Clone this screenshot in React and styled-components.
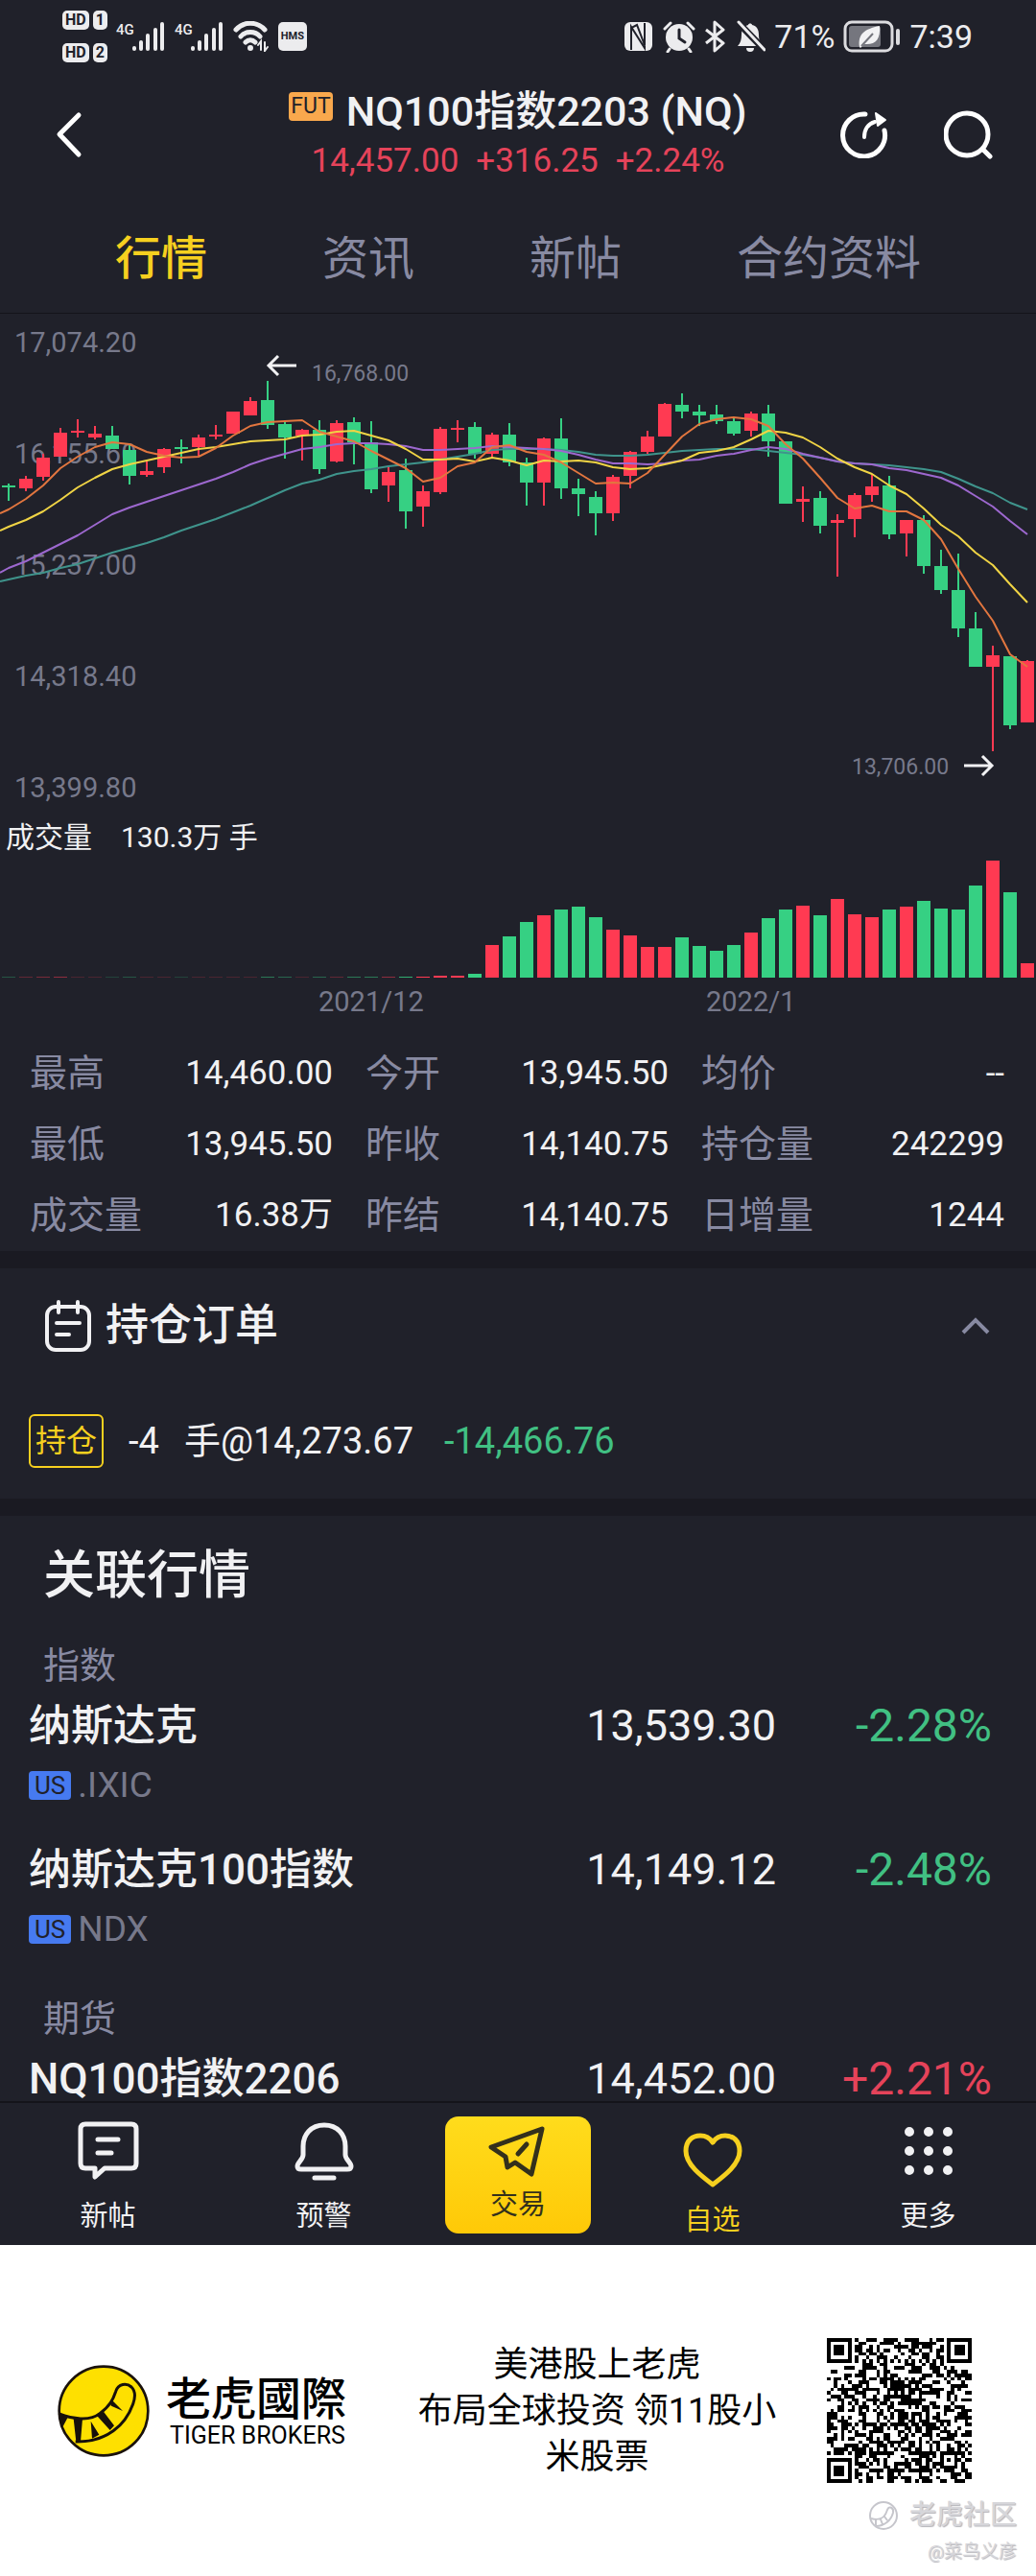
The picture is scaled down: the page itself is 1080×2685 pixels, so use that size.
import React, { useState } from 'react'
import styled, { createGlobalStyle, css } from 'styled-components'

const color = {
  bg: '#20212a',
  band: '#1a1a22',
  line: '#14141a',
  text: '#f1f1f3',
  muted: '#888aa2',
  axis: '#77798b',
  red: '#e5435a',
  green: '#41c083',
  barRed: '#ff3a52',
  barGreen: '#36d083',
  yellow: '#f6d01f',
}

const tabs = ['行情', '资讯', '新帖', '合约资料']

const stats = [
  ['最高', '14,460.00'],
  ['今开', '13,945.50'],
  ['均价', '--'],
  ['最低', '13,945.50'],
  ['昨收', '14,140.75'],
  ['持仓量', '242299'],
  ['成交量', '16.38万'],
  ['昨结', '14,140.75'],
  ['日增量', '1244'],
]

const groups = [
  {
    title: '指数',
    rows: [
      { name: '纳斯达克', code: '.IXIC', price: '13,539.30', change: '-2.28%' },
      { name: '纳斯达克100指数', code: 'NDX', price: '14,149.12', change: '-2.48%' },
    ],
  },
  {
    title: '期货',
    rows: [{ name: 'NQ100指数2206', price: '14,452.00', change: '+2.21%' }],
  },
]

// [up, high, body top, body bottom, low, volume]
const candles = [
  [0, 177, 179, 181, 195, 0.3], [1, 169, 172, 182, 185, 0.3], [1, 146, 150, 170, 174, 0.4],
  [1, 119, 124, 149, 149, 0.5], [1, 110, 122, 124, 129, 0.2], [1, 117, 125, 129, 131, 0.2],
  [0, 117, 127, 141, 141, 0.2], [0, 136, 142, 169, 178, 0.3], [1, 154, 164, 168, 170, 0.2],
  [1, 140, 141, 160, 166, 0.2], [0, 131, 139, 141, 156, 0.2], [1, 126, 129, 139, 148, 0.2],
  [1, 116, 126, 128, 131, 0.2], [1, 102, 102, 125, 125, 0.2], [1, 87, 91, 106, 106, 0.2],
  [0, 70, 90, 116, 120, 0.5], [0, 111, 115, 129, 151, 0.4], [1, 120, 121, 127, 153, 0.2],
  [0, 111, 121, 162, 167, 0.4], [1, 111, 114, 154, 155, 0.3], [0, 108, 113, 134, 157, 0.5],
  [0, 112, 134, 183, 187, 0.5], [1, 160, 165, 179, 196, 0.5], [0, 151, 163, 206, 224, 0.8],
  [1, 179, 185, 201, 222, 1], [1, 118, 120, 186, 188, 2], [1, 111, 119, 121, 134, 2],
  [0, 113, 118, 146, 151, 4], [1, 124, 126, 146, 150, 34], [0, 114, 126, 155, 159, 43],
  [0, 150, 155, 176, 200, 58], [1, 129, 130, 176, 200, 65], [0, 109, 130, 182, 193, 71],
  [0, 172, 182, 188, 211, 74], [0, 185, 191, 208, 231, 63], [1, 168, 170, 208, 216, 50],
  [1, 143, 144, 169, 182, 44], [1, 122, 128, 144, 146, 32], [1, 93, 94, 128, 128, 32],
  [0, 83, 95, 102, 109, 42], [0, 95, 102, 106, 117, 33], [0, 95, 105, 112, 115, 28],
  [0, 109, 112, 125, 127, 34], [1, 102, 104, 122, 128, 47], [0, 95, 104, 133, 149, 62],
  [0, 133, 133, 198, 198, 71], [1, 180, 193, 196, 217, 75], [0, 185, 192, 221, 229, 65],
  [1, 209, 215, 218, 274, 82], [1, 187, 189, 214, 233, 66], [1, 168, 180, 189, 196, 63],
  [0, 169, 179, 230, 235, 71], [1, 215, 215, 229, 253, 74], [0, 210, 215, 263, 271, 80],
  [0, 246, 263, 288, 292, 72], [0, 250, 288, 328, 337, 71], [0, 311, 328, 368, 368, 96],
  [1, 346, 356, 368, 456, 122], [0, 357, 357, 429, 433, 89], [1, 361, 362, 426, 426, 15],
]

const averages = [
  {
    stroke: '#3f948c',
    points: [279, 277, 273, 270, 265, 261, 255, 249, 244, 239, 233, 226, 220, 214, 207, 200, 192, 184, 177, 173, 167, 164, 162, 159, 157, 155, 152, 149, 146, 142, 141, 141, 141, 142, 144, 147, 148, 148, 147, 145, 143, 142, 141, 141, 141, 143, 145, 147, 150, 154, 156, 157, 158, 160, 162, 165, 172, 180, 187, 197, 204],
  },
  {
    stroke: '#9d68cf',
    points: [270, 265, 258, 249, 240, 231, 220, 209, 202, 196, 190, 184, 178, 172, 165, 157, 151, 146, 141, 139, 136, 135, 135, 136, 138, 142, 142, 141, 140, 138, 139, 140, 141, 143, 147, 152, 156, 156, 157, 156, 153, 152, 148, 146, 142, 139, 141, 146, 150, 154, 156, 157, 161, 163, 167, 171, 179, 190, 201, 216, 230],
  },
  {
    stroke: '#f0d445',
    points: [226, 222, 215, 206, 194, 181, 171, 162, 157, 153, 149, 145, 141, 139, 136, 133, 132, 131, 127, 126, 123, 122, 127, 132, 141, 152, 152, 151, 154, 150, 153, 158, 153, 154, 153, 155, 160, 162, 161, 157, 153, 145, 143, 139, 131, 122, 124, 129, 139, 151, 160, 167, 179, 188, 203, 220, 232, 249, 262, 282, 301],
  },
  {
    stroke: '#e2763f',
    points: [208, 204, 193, 179, 161, 149, 139, 134, 136, 144, 148, 150, 149, 140, 127, 117, 113, 112, 111, 123, 128, 133, 143, 152, 161, 175, 171, 159, 155, 139, 137, 144, 147, 155, 166, 177, 176, 177, 166, 147, 128, 115, 110, 108, 110, 117, 136, 151, 171, 192, 203, 200, 206, 206, 215, 235, 266, 295, 320, 355, 368],
  },
]

const axisLabels = ['17,074.20', '16,155.60', '15,237.00', '14,318.40', '13,399.80']

const candleX = (i) => 9 + i * 18
const linePoints = (points) =>
  points.map((y, i) => `${i === 0 ? 0 : candleX(i - 1)},${y}`).join(' ')

function PriceChart() {
  return (
    <Chart viewBox="0 0 1080 523" role="img" aria-label="NQ100 K线">
      {axisLabels.map((label, i) => (
        <AxisText key={label} x="15" y={40 + i * 116}>
          {label}
        </AxisText>
      ))}
      {candles.map(([up, high, top, bottom, low], i) => (
        <g key={i} fill={up ? color.barRed : color.barGreen}>
          <rect x={candleX(i) - 1} y={high} width="2" height={low - high} />
          <rect x={candleX(i) - 7} y={top} width="14" height={bottom - top} />
        </g>
      ))}
      {averages.map((line) => (
        <polyline
          key={line.stroke}
          points={linePoints(line.points)}
          fill="none"
          stroke={line.stroke}
          strokeWidth="2"
          strokeLinejoin="round"
        />
      ))}
      <g fill="none" stroke={color.text} strokeWidth="3">
        <path d="M309 54H280M290 44L280 54L290 64" />
        <path d="M1005 471H1034M1024 461L1034 471L1024 481" />
      </g>
      <AxisText $small x="325" y="70">16,768.00</AxisText>
      <AxisText $small x="888" y="480">13,706.00</AxisText>
    </Chart>
  )
}

function VolumeChart() {
  return (
    <Chart viewBox="0 0 1080 174" role="img" aria-label="成交量">
      {candles.map(([up, , , , , volume], i) => (
        <rect
          key={i}
          x={candleX(i) - 7}
          y={123 - volume}
          width="14"
          height={volume}
          fill={up ? color.barRed : color.barGreen}
        />
      ))}
      <AxisText x="332" y="158">2021/12</AxisText>
      <AxisText x="736" y="158">2022/1</AxisText>
    </Chart>
  )
}

function Signal() {
  return (
    <svg width="52" height="32" viewBox="0 0 52 32" fill="#ececee">
      <SignalText x="0" y="14">4G</SignalText>
      <rect x="17" y="26" width="4" height="5" rx="2" />
      <rect x="24" y="20" width="4" height="11" rx="2" />
      <rect x="31" y="13" width="4" height="18" rx="2" />
      <rect x="39" y="7" width="4" height="24" rx="2" />
      <rect x="46" y="1" width="4" height="30" rx="2" />
    </svg>
  )
}

function Wifi() {
  return (
    <svg width="38" height="32" viewBox="0 0 38 32" fill="none" stroke="#ececee" strokeWidth="5" strokeLinecap="round">
      <path d="M3 9C11 0 25 0 33 9" />
      <path d="M8 16C13 10 23 10 28 16" />
      <path d="M13 22C16 19 20 19 23 22" />
      <circle cx="18" cy="28" r="2" fill="#ececee" strokeWidth="2" />
      <path d="M29 30V21L26 25M33 22V31L36 27" strokeWidth="2" />
    </svg>
  )
}

function StatusIcons() {
  return (
    <svg width="148" height="34" viewBox="0 0 148 34" fill="#ececee">
      <rect x="1" y="2" width="29" height="30" rx="6" />
      <path d="M8 31V8L14 5L22 26V3M8 29V7L22 29V3" fill="none" stroke={color.bg} strokeWidth="2" />
      <circle cx="58" cy="18" r="14" />
      <path d="M43 9L49 3M73 9L67 3M48 30L46 33M68 30L70 33" stroke="#ececee" strokeWidth="3" strokeLinecap="round" />
      <path d="M58 10V19L64 23" fill="none" stroke={color.bg} strokeWidth="3" strokeLinecap="round" />
      <path d="M86 10L104 24L95 32V2L104 10L86 24" fill="none" stroke="#ececee" strokeWidth="3" strokeLinejoin="round" />
      <path d="M119 27C122 24 123 20 123 15C123 9 126 6 130 5C130 3 134 3 134 5C139 6 141 10 141 15C141 20 142 24 146 27ZM128 29H136A4 4 0 0 1 128 29Z" />
      <path d="M120 3L147 31" stroke={color.bg} strokeWidth="7" />
      <path d="M120 2L147 31" stroke="#ececee" strokeWidth="3" strokeLinecap="round" />
    </svg>
  )
}

function Battery() {
  return (
    <svg width="60" height="34" viewBox="0 0 60 34">
      <rect x="2" y="2" width="49" height="30" rx="7" fill="none" stroke="#dcdcdf" strokeWidth="3" />
      <rect x="6" y="6" width="33" height="22" rx="3" fill="#75767e" />
      <path d="M17 28C15 15 22 9 38 6C39 20 34 26 22 25L18 29Z" fill="#f2f2f4" />
      <path d="M19 27L31 14" stroke="#75767e" strokeWidth="2" />
      <rect x="55" y="9" width="4" height="17" rx="2" fill="#dcdcdf" />
    </svg>
  )
}

function BackIcon() {
  return (
    <svg width="28" height="50" viewBox="0 0 28 50" fill="none" stroke="#fff" strokeWidth="5" strokeLinecap="round" strokeLinejoin="round">
      <path d="M24 5L4 25L24 46" />
    </svg>
  )
}

function GaugeIcon() {
  return (
    <svg width="50" height="50" viewBox="0 0 50 50" fill="none" stroke="#fff" strokeWidth="5" strokeLinecap="round">
      <path d="M26 4A22 22 0 1 0 46 21" />
      <path d="M25 28C25 20 29 14 36 12" strokeWidth="4" />
      <path d="M37 3L47 10L39 16Z" fill="#fff" strokeWidth="2" strokeLinejoin="round" />
    </svg>
  )
}

function SearchIcon() {
  return (
    <svg width="52" height="52" viewBox="0 0 52 52" fill="none" stroke="#fff" strokeWidth="5" strokeLinecap="round">
      <circle cx="24" cy="26" r="22" />
      <path d="M41 42L48 49" />
    </svg>
  )
}

function OrderIcon() {
  return (
    <svg width="48" height="56" viewBox="0 0 48 56" fill="none" stroke={color.text} strokeWidth="4" strokeLinecap="round">
      <rect x="2" y="8" width="44" height="45" rx="9" />
      <path d="M14 3V14M34 3V14" />
      <path d="M12 25H36M12 37H25" />
    </svg>
  )
}

function ChevronUp() {
  return (
    <svg width="32" height="20" viewBox="0 0 32 20" fill="none" stroke={color.muted} strokeWidth="4">
      <path d="M3 17L16 4L29 17" />
    </svg>
  )
}

const navIcons = {
  post: (
    <path d="M8 4H56Q61 4 61 9V45Q61 50 56 50H28L18 59V50H8Q3 50 3 45V9Q3 4 8 4ZM21 20H42M21 34H35" />
  ),
  alert: (
    <path d="M32 5C18 5 10 15 10 27V36C10 41 4 44 4 48Q4 51 8 51H56Q60 51 60 48C60 44 54 41 54 36V27C54 15 46 5 32 5ZM22 60H42" />
  ),
  trade: <path d="M57 9L4 28L19 38L21 49L29 44L46 56ZM41 25L32 35" />,
  heart: (
    <path d="M32 59C20 50 4 38 4 24C4 13 11 8 19 8C26 8 30 12 32 15C34 12 38 8 45 8C53 8 60 13 60 24C60 38 44 50 32 59Z" />
  ),
  more: [12, 32, 52].map((y) =>
    [12, 32, 52].map((x) => (
      <circle key={`${x}-${y}`} cx={x} cy={y} r="3" fill="currentColor" strokeWidth="4" />
    ))
  ),
}

function NavIcon({ name }) {
  return (
    <svg width="64" height="64" viewBox="0 0 64 64" fill="none" stroke="currentColor" strokeWidth="5" strokeLinecap="round" strokeLinejoin="round">
      {navIcons[name]}
    </svg>
  )
}

function TigerLogo() {
  return (
    <svg width="96" height="96" viewBox="180 134 288 288">
      <circle cx="324" cy="278" r="139" fill="#fee000" stroke="#1a120c" strokeWidth="8" />
      <path
        d="M185 287C225 302 280 312 312 286C345 262 354 240 362 217C370 192 396 190 411 203C424 216 424 234 416 256C392 322 335 376 236 374"
        fill="none"
        stroke="#17100b"
        strokeWidth="9"
      />
      <path
        d="M182 286L211 300L194 332ZM230 302H258L252 374H238ZM284 310L310 352L288 364ZM304 294L324 280L357 324L344 338ZM342 250L352 246L384 278L348 262Z"
        fill="#17100b"
      />
    </svg>
  )
}

const QR_SIZE = 41

function isDark(x, y, noise) {
  const corners = [[0, 0], [QR_SIZE - 7, 0], [0, QR_SIZE - 7]]
  for (const [cx, cy] of corners) {
    const d = Math.max(Math.abs(x - cx - 3), Math.abs(y - cy - 3))
    if (d <= 4) return d !== 2 && d !== 4
  }
  const a = Math.max(Math.abs(x - 34), Math.abs(y - 34))
  if (a <= 2) return a !== 1
  if (x === 6 || y === 6) return (x + y) % 2 === 0
  return noise > 0.49
}

function buildQr() {
  let seed = 20220126
  let d = ''
  for (let y = 0; y < QR_SIZE; y++) {
    for (let x = 0; x < QR_SIZE; x++) {
      seed = (seed * 48271) % 2147483647
      if (isDark(x, y, seed / 2147483647)) d += `M${x} ${y}h1v1h-1z`
    }
  }
  return d
}

const qrPath = buildQr()

export default function App() {
  const [tab, setTab] = useState('行情')
  const [open, setOpen] = useState(true)

  return (
    <Page>
      <GlobalStyle />
      <Screen>
        <StatusBar>
          <StatusGroup>
            <SimStack>
              <SimRow><SimTag>HD</SimTag><SimTag>1</SimTag></SimRow>
              <SimRow><SimTag>HD</SimTag><SimTag>2</SimTag></SimRow>
            </SimStack>
            <Signal />
            <Signal />
            <Wifi />
            <HmsTag>HMS</HmsTag>
          </StatusGroup>
          <StatusGroup>
            <StatusIcons />
            <StatusText>71%</StatusText>
            <Battery />
            <StatusText>7:39</StatusText>
          </StatusGroup>
        </StatusBar>

        <Header>
          <BackButton aria-label="返回"><BackIcon /></BackButton>
          <div>
            <Title><FutTag>FUT</FutTag>NQ100指数2203 (NQ)</Title>
            <Quote>
              <span>14,457.00</span>
              <span>+316.25</span>
              <span>+2.24%</span>
            </Quote>
          </div>
          <HeaderActions>
            <IconButton aria-label="刷新"><GaugeIcon /></IconButton>
            <IconButton aria-label="搜索"><SearchIcon /></IconButton>
          </HeaderActions>
        </Header>

        <Tabs>
          {tabs.map((name) => (
            <Tab key={name} $active={name === tab} onClick={() => setTab(name)}>
              {name}
            </Tab>
          ))}
        </Tabs>

        <PriceChart />
        <VolumeTitle>
          <span>成交量</span>
          <span>130.3万 手</span>
        </VolumeTitle>
        <VolumeChart />

        <Stats>
          {stats.map(([label, value]) => (
            <Stat key={label}>
              <dt>{label}</dt>
              <dd>{value}</dd>
            </Stat>
          ))}
        </Stats>

        <Section>
          <OrderToggle aria-expanded={open} onClick={() => setOpen(!open)}>
            <OrderIcon />
            <span>持仓订单</span>
            <ChevronUp />
          </OrderToggle>
          {open && (
            <Order>
              <OrderTag>持仓</OrderTag>
              <Position>
                <span>-4</span>
                <span>手@14,273.67</span>
                <Loss>-14,466.76</Loss>
              </Position>
            </Order>
          )}
        </Section>

        <Section>
          <SectionTitle>关联行情</SectionTitle>
          {groups.map((group) => (
            <div key={group.title}>
              <GroupTitle>{group.title}</GroupTitle>
              {group.rows.map((row) => (
                <Row key={row.name}>
                  <Name>{row.name}</Name>
                  <Price>{row.price}</Price>
                  <Change $up={row.change[0] === '+'}>{row.change}</Change>
                  {row.code && (
                    <Code>
                      <Market>US</Market>
                      {row.code}
                    </Code>
                  )}
                </Row>
              ))}
            </div>
          ))}
        </Section>

        <BottomNav>
          <NavButton><NavIcon name="post" />新帖</NavButton>
          <NavButton><NavIcon name="alert" />预警</NavButton>
          <TradeButton><NavIcon name="trade" />交易</TradeButton>
          <NavButton $active><NavIcon name="heart" />自选</NavButton>
          <NavButton><NavIcon name="more" />更多</NavButton>
        </BottomNav>
      </Screen>

      <Footer>
        <TigerLogo />
        <Brand>
          <BrandName>老虎國際</BrandName>
          <BrandLatin>TIGER BROKERS</BrandLatin>
        </Brand>
        <Slogan>
          美港股上老虎
          <br />
          布局全球投资 领11股小米股票
        </Slogan>
        <Qr viewBox="0 0 41 41" shapeRendering="crispEdges" role="img" aria-label="二维码">
          <path d={qrPath} />
        </Qr>
        <Watermark>
          <WatermarkBrand>
            <svg width="32" height="32" viewBox="0 0 32 32" fill="none" stroke="#c6c6cc" strokeWidth="2">
              <circle cx="16" cy="16" r="14" />
              <path d="M3 19C14 22 18 17 20 10C22 5 27 8 26 13C24 21 17 27 8 27M8 20V26M13 20L15 25M17 17L20 21" />
            </svg>
            老虎社区
          </WatermarkBrand>
          <WatermarkUser>@菜鸟义彦</WatermarkUser>
        </Watermark>
      </Footer>
    </Page>
  )
}

const GlobalStyle = createGlobalStyle`
  * {
    box-sizing: border-box;
  }
  body {
    margin: 0;
    background: #fff;
    font-family: Roboto, 'Noto Sans CJK SC', sans-serif;
  }
  button {
    margin: 0;
    padding: 0;
    border: 0;
    background: none;
    color: inherit;
    font: inherit;
    cursor: pointer;
  }
  svg {
    display: block;
    flex: none;
  }
`

const Page = styled.div`
  min-width: 1000px;
`
const Screen = styled.main`
  background: ${color.bg};
  color: ${color.text};
`
const StatusBar = styled.div`
  display: flex;
  justify-content: space-between;
  align-items: center;
  height: 76px;
  padding: 0 66px 0 65px;
`
const StatusGroup = styled.div`
  display: flex;
  align-items: center;
  gap: 9px;
`
const StatusText = styled.span`
  font-size: 34px;
  line-height: 40px;
  color: #ececee;
`
const SimStack = styled.div`
  display: grid;
  gap: 14px;
`
const SimRow = styled.div`
  display: flex;
  gap: 4px;
`
const SimTag = styled.span`
  padding: 0 3px;
  border-radius: 5px;
  background: #ececee;
  color: ${color.bg};
  font-size: 16px;
  font-weight: 700;
  line-height: 20px;
`
const SignalText = styled.text`
  font-size: 15px;
  font-weight: 500;
`
const HmsTag = styled.span`
  width: 30px;
  border-radius: 5px;
  background: #ececee;
  color: ${color.bg};
  font-size: 11px;
  font-weight: 700;
  line-height: 30px;
  text-align: center;
`
const Header = styled.header`
  display: grid;
  grid-template-columns: 1fr auto 1fr;
  align-items: center;
  height: 128px;
  padding: 0 44px;
`
const IconButton = styled.button`
  display: flex;
`
const BackButton = styled(IconButton)`
  padding-left: 14px;
`
const HeaderActions = styled.div`
  display: flex;
  justify-content: flex-end;
  align-items: center;
  gap: 58px;
`
const Title = styled.h1`
  display: flex;
  align-items: flex-start;
  gap: 14px;
  margin: 0;
  font-size: 43px;
  font-weight: 500;
  line-height: 56px;
`
const FutTag = styled.span`
  margin-top: 8px;
  padding: 0 2px;
  border-radius: 4px;
  background: #f9a84d;
  color: ${color.bg};
  font-size: 23px;
  font-weight: 400;
  line-height: 30px;
`
const Quote = styled.div`
  display: flex;
  justify-content: center;
  gap: 18px;
  color: ${color.red};
  font-size: 35px;
  line-height: 48px;
`
const Tabs = styled.nav`
  display: flex;
  justify-content: space-evenly;
  height: 123px;
  border-bottom: 1px solid ${color.line};
`
const Tab = styled.button`
  color: ${(p) => (p.$active ? color.yellow : color.muted)};
  font-size: 48px;
  font-weight: ${(p) => (p.$active ? 500 : 400)};
`
const Chart = styled.svg`
  width: 100%;
`
const AxisText = styled.text`
  fill: ${color.axis};
  font-size: ${(p) => (p.$small ? 23 : 29)}px;
`
const VolumeTitle = styled.div`
  display: flex;
  gap: 30px;
  padding-left: 6px;
  font-size: 30px;
  line-height: 46px;
`
const Stats = styled.dl`
  display: grid;
  grid-template-columns: repeat(3, 1fr);
  column-gap: 34px;
  margin: 0;
  padding: 12px 33px 0 31px;
`
const Stat = styled.div`
  display: flex;
  justify-content: space-between;
  line-height: 74px;

  dt {
    color: ${color.muted};
    font-size: 39px;
  }
  dd {
    margin: 0;
    font-size: 35px;
  }
`
const Section = styled.section`
  border-top: 18px solid ${color.band};
`
const OrderToggle = styled.button`
  display: flex;
  align-items: center;
  gap: 15px;
  width: 100%;
  height: 120px;
  padding: 0 47px;
  font-size: 45px;
  font-weight: 500;
  line-height: 56px;

  svg:last-child {
    margin-left: auto;
  }
`
const Order = styled.div`
  display: flex;
  align-items: center;
  gap: 26px;
  height: 120px;
  padding: 0 30px;
`
const OrderTag = styled.span`
  padding: 0 5px;
  border: 2px solid ${color.yellow};
  border-radius: 6px;
  color: ${color.yellow};
  font-size: 32px;
  line-height: 52px;
`
const Position = styled.div`
  display: flex;
  align-items: baseline;
  gap: 26px;
  font-size: 38px;
  line-height: 52px;
`
const Loss = styled.span`
  padding-left: 6px;
  color: ${color.green};
`
const SectionTitle = styled.h2`
  margin: 0;
  padding: 4px 45px 0;
  font-size: 54px;
  font-weight: 500;
  line-height: 118px;
`
const GroupTitle = styled.h3`
  margin: 0;
  padding: 0 45px;
  color: ${color.muted};
  font-size: 38px;
  font-weight: 400;
  line-height: 68px;
`
const Row = styled.div`
  display: grid;
  grid-template-columns: 1fr auto 225px;
  padding: 0 46px 0 30px;
  line-height: 58px;
`
const Name = styled.span`
  font-size: 44px;
  font-weight: 500;
`
const Price = styled.span`
  font-size: 45px;
`
const Change = styled.span`
  color: ${(p) => (p.$up ? color.red : color.green)};
  font-size: 48px;
  text-align: right;
`
const Code = styled.span`
  display: flex;
  align-items: center;
  gap: 7px;
  padding-bottom: 26px;
  color: ${color.axis};
  font-size: 37px;
  line-height: 66px;
`
const Market = styled.span`
  padding: 0 6px;
  border-radius: 4px;
  background: #467af0;
  color: ${color.bg};
  font-size: 26px;
  line-height: 30px;
`
const BottomNav = styled.nav`
  position: relative;
  display: grid;
  grid-template-columns: 1fr 1fr 180px 1fr 1fr;
  align-items: start;
  height: 150px;
  margin-top: -6px;
  border-top: 2px solid ${color.line};
  background: ${color.bg};
`
const NavButton = styled.button`
  display: flex;
  flex-direction: column;
  align-items: center;
  gap: 18px;
  padding-top: 18px;
  font-size: 29px;
  line-height: 36px;

  ${(p) =>
    p.$active &&
    css`
      gap: 14px;
      padding-top: 26px;
      color: ${color.yellow};
    `}
`
const TradeButton = styled(NavButton)`
  gap: 6px;
  width: 152px;
  height: 122px;
  margin: 14px auto 0;
  padding-top: 4px;
  border-radius: 14px;
  background: linear-gradient(#ffdc1c, #ffc907);
  color: #33301c;
`
const Footer = styled.footer`
  position: relative;
  display: flex;
  align-items: center;
  height: 345px;
  padding: 0 67px 0 60px;
  background: #fff;
  color: #000;
`
const Brand = styled.div`
  padding-left: 17px;
`
const BrandName = styled.div`
  font-family: 'Noto Sans CJK TC', sans-serif;
  font-size: 47px;
  font-weight: 500;
  line-height: 52px;
`
const BrandLatin = styled.div`
  padding-left: 4px;
  font-size: 25px;
  line-height: 32px;
`
const Slogan = styled.p`
  flex: 1;
  margin: 0;
  padding: 0 50px 0 72px;
  font-size: 36px;
  line-height: 48px;
  text-align: center;
`
const Qr = styled.svg`
  width: 151px;
  height: 151px;
`
const Watermark = styled.div`
  position: absolute;
  right: 20px;
  bottom: 10px;
  display: flex;
  flex-direction: column;
  align-items: flex-end;
  color: #d6d6da;
  text-shadow: 1px 1px 1px #b4b4ba;
`
const WatermarkBrand = styled.div`
  display: flex;
  align-items: center;
  gap: 11px;
  font-size: 28px;
  font-weight: 500;
  line-height: 46px;
`
const WatermarkUser = styled.div`
  font-size: 19px;
  line-height: 30px;
`
